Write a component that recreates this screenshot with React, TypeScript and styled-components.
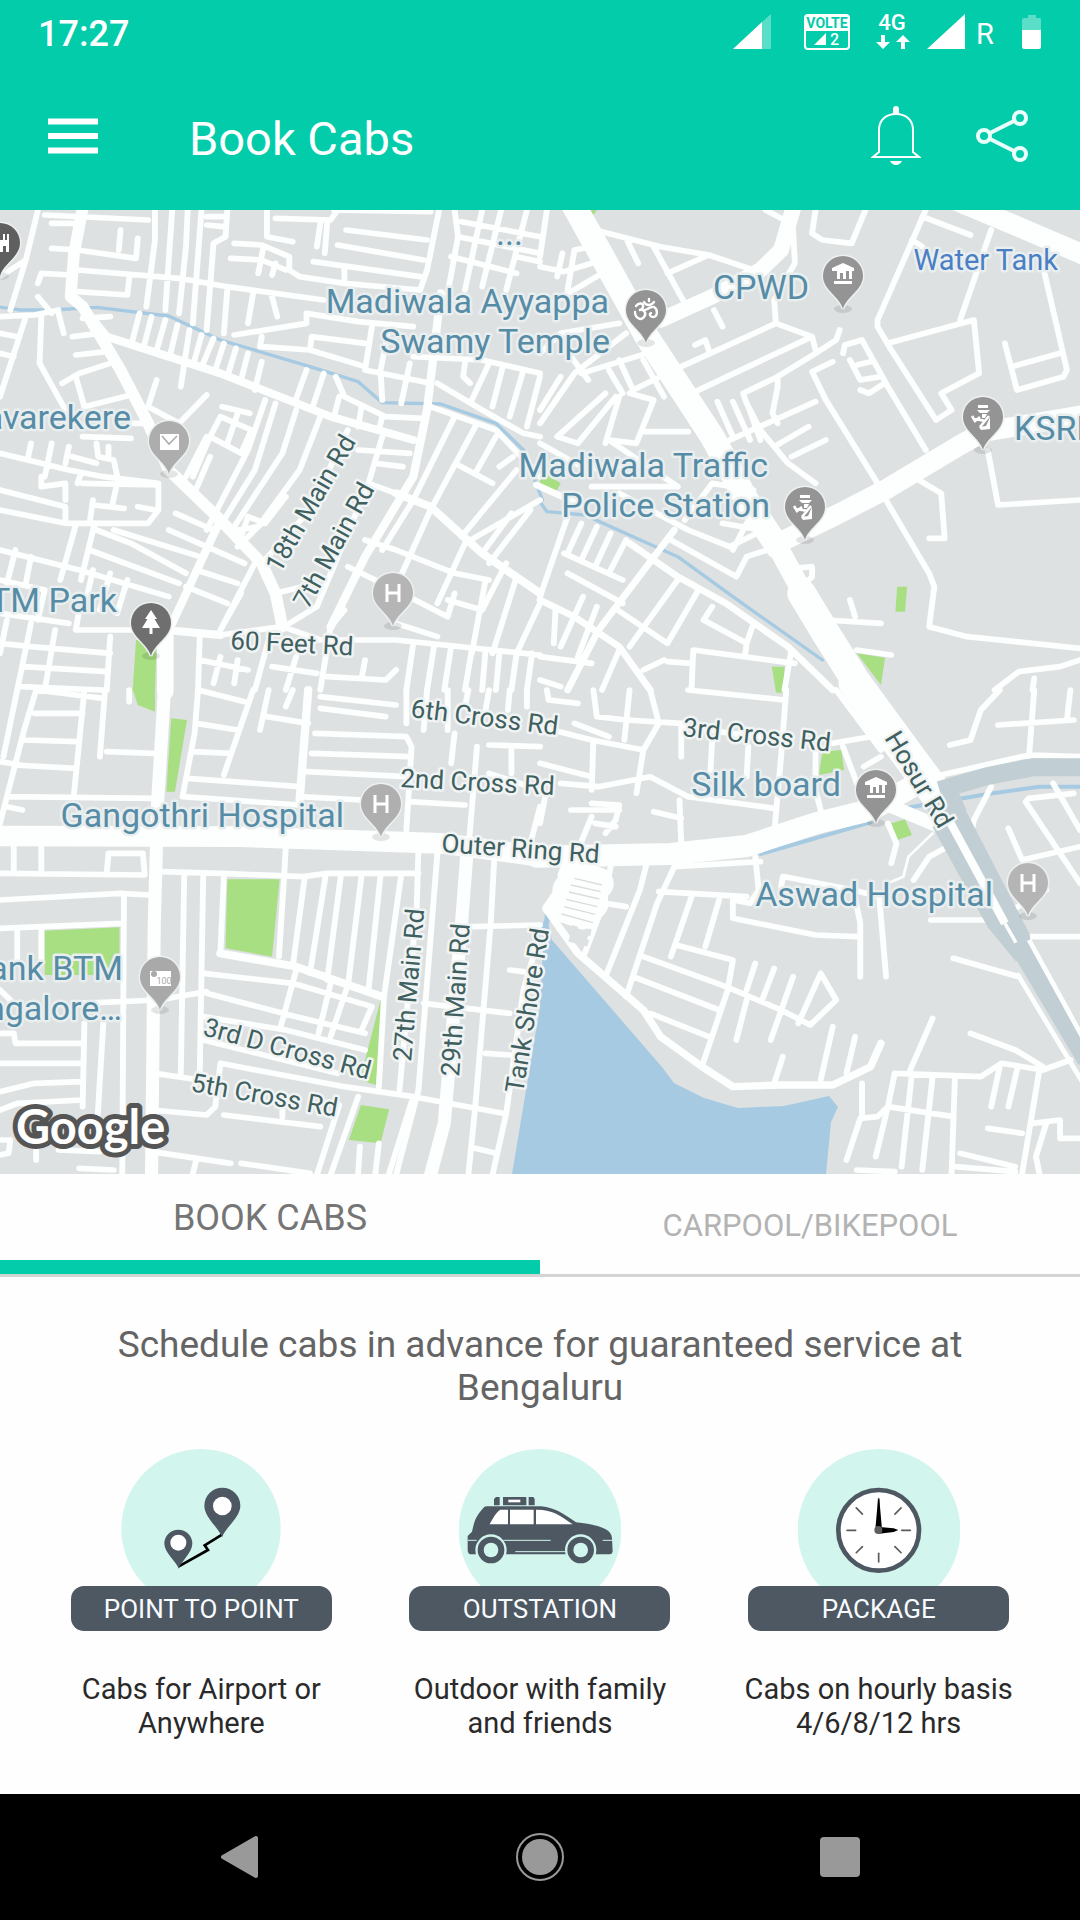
import React from "react";
import styled, { createGlobalStyle } from "styled-components";

const teal = "#03ccab";
const slate = "#4d5862";

const GlobalStyle = createGlobalStyle`
  * { box-sizing: border-box; }
  body { margin: 0; background: #fff; font-family: Roboto, "Liberation Sans", sans-serif; }
  button { font: inherit; border: 0; padding: 0; background: none; color: inherit; cursor: pointer; }
  svg { display: block; flex: none; }
`;

const Page = styled.div`
  min-height: 100vh;
  display: flex;
  flex-direction: column;
  background: #fefefe;
`;

const StatusBar = styled.div`
  height: 64px;
  padding: 4px 38px 0;
  display: flex;
  align-items: center;
  justify-content: space-between;
  background: ${teal};
  color: #fff;
`;

const Clock = styled.time`
  font-size: 36px;
  font-weight: 500;
`;

const StatusIcons = styled.div`
  padding-bottom: 4px;
  display: flex;
  align-items: center;
`;

const StatusGlyph = styled.svg<{ $gap: number }>`
  height: 36px;
  margin-left: ${(p) => p.$gap}px;
  overflow: visible;
`;

const AppBar = styled.header`
  height: 146px;
  padding: 0 46px 2px 41px;
  display: flex;
  align-items: center;
  background: ${teal};
  color: #fff;
`;

const Title = styled.h1`
  margin: 0 auto 0 84px;
  padding-top: 6px;
  font-size: 47px;
  line-height: 56px;
  font-weight: 400;
`;

const IconButton = styled.button`
  width: 64px;
  height: 64px;
  display: flex;
  align-items: center;
  justify-content: center;

  & + & {
    margin-left: 42px;
  }
`;

const MapArea = styled.section`
  flex: 1;
  min-height: 480px;
  display: flex;
  overflow: hidden;
  background: #dee1e2;
`;

const MapDrawing = styled.svg`
  width: 100%;
  flex: 1;
  height: auto;
  min-height: 0;
  font-family: Roboto, "Liberation Sans", sans-serif;
`;

const PlaceText = styled.text<{ $water?: boolean }>`
  font-size: ${(p) => (p.$water ? 29 : 34)}px;
  fill: ${(p) => (p.$water ? "#4a7fc6" : "#568ca6")};
  stroke: #e9eeef;
  stroke-width: 5px;
  stroke-linejoin: round;
  paint-order: stroke;
`;

const RoadText = styled.text`
  font-size: 26px;
  fill: #40605f;
  stroke: #f1f4f4;
  stroke-width: 5px;
  stroke-linejoin: round;
  paint-order: stroke;
`;

const LogoText = styled.text`
  font-family: Lato, Roboto, sans-serif;
  font-size: 47px;
  font-weight: 700;
  fill: #fff;
  stroke: #555;
  stroke-width: 10px;
  stroke-linejoin: round;
  paint-order: stroke;
`;

const Tabs = styled.div`
  display: grid;
  grid-template-columns: 1fr 1fr;
  border-bottom: 3px solid #d3d4d4;
`;

const Tab = styled.button<{ $active?: boolean }>`
  height: 100px;
  padding-top: 2px;
  font-size: ${(p) => (p.$active ? 36 : 31)}px;
  color: ${(p) => (p.$active ? "#757575" : "#b3b3b3")};
  border-bottom: ${(p) => (p.$active ? `14px solid ${teal}` : "0")};
`;

const Booking = styled.main`
  padding: 46px 32px 54px;
`;

const Headline = styled.h2`
  max-width: 900px;
  margin: 0 auto;
  font-size: 37px;
  line-height: 43px;
  font-weight: 400;
  text-align: center;
  color: #646464;
`;

const Services = styled.div`
  margin-top: 40px;
  display: grid;
  grid-template-columns: repeat(3, 1fr);
`;

const Service = styled.article`
  display: flex;
  flex-direction: column;
  align-items: center;
  text-align: center;
`;

const ServiceButton = styled.button`
  width: 261px;
  height: 45px;
  border-radius: 13px;
  background: ${slate};
  color: #f8fbff;
  font-size: 26px;
`;

const ServiceNote = styled.p`
  max-width: 290px;
  margin: 41px 0 0;
  font-size: 29px;
  line-height: 34px;
  color: #2a2a2a;
`;

const NavBar = styled.nav`
  height: 126px;
  padding: 0 90px;
  display: grid;
  grid-template-columns: repeat(3, 1fr);
  background: #000;
`;

const NavButton = styled.button`
  display: flex;
  align-items: center;
  justify-content: center;
`;

/* ---------- map data: each sheet is a quarter of the map, 1568 x 1440 units ---------- */

type Stroke = { w: number; d: string; c?: string };
type Sheet = { x: number; y: number; green: string[]; water: Stroke[]; roads: Stroke[]; over?: Stroke[] };

const S = 17;

const northWest: Sheet = {
  x: 0,
  y: 0,
  green: ["395,1290 455,1290 450,1445 385,1445"],
  water: [{ w: 10, d: "M-10,290 L60,300 150,300 280,292 490,318 640,390 900,470 1040,515 1110,578 1280,582 1440,640 1520,720 1575,870" }],
  roads: [
    { w: 34, d: "M240,-5 L215,130 205,260 240,290 350,480 430,640 490,780 640,930 760,1060 800,1150 820,1250" },
    { w: 24, d: "M240,290 L310,380 640,490 960,620 1200,690 M1280,250 L1240,600 1200,800 1060,1040 960,1250 M1150,850 L1250,890 1400,1030 1568,1150 M640,930 L590,1040 500,1240 M480,1260 L640,1275" },
    { w: 48, d: "M480,1280 L480,1445" },
    { w: S, d: "M110,0 L75,150 0,200 M75,150 L30,300 M130,15 L430,30 M350,60 L345,120 M400,85 L395,145 M150,40 L225,40 M150,115 L225,120 395,145 M450,0 L450,90 425,290 M500,0 L480,300 M545,0 L540,110 520,310 M585,0 L560,340 M660,0 L655,80 620,100 600,360 M600,45 L650,50 M600,20 L650,20 M225,180 L520,205 660,230 940,270 M110,220 L120,190 205,195 M225,245 L370,255 375,205 M660,240 L650,370 M735,250 L720,340 M790,260 L805,320" },
    { w: S, d: "M680,100 L760,105 840,140 840,180 870,200 1000,220 1220,240 M670,145 L760,150 830,180 M765,110 L750,190 M800,160 L790,195 M775,0 L775,80 850,95 M800,25 L960,30 980,0 M930,40 L920,110 M950,40 L943,130 M970,0 L1250,5 M1005,60 L1240,90 M980,105 L1230,150 M910,155 L1220,200 M1000,170 L1000,220 M1275,0 L1240,180 1220,240 M1320,0 L1330,80 1300,250 M1340,35 L1568,80 M1330,80 L1568,130 M1310,140 L1500,190 M1400,0 L1350,240 M1455,0 L1400,230 M1530,0 L1470,240 M1500,140 L1568,155" },
    { w: S, d: "M680,375 L890,340 890,310 1040,335 1200,350 M760,410 L900,420 905,380 1060,400 M760,380 L755,410 M900,420 L1060,470 M1080,350 L1060,480 1250,520 M1130,350 L1105,480 1110,570 M1190,460 L1165,580 M1200,440 L1400,450 1568,490 M1270,520 L1400,600 1520,670 1568,680 M1350,460 L1345,500 1365,520 M1420,460 L1370,570 M1460,470 L1430,590 M1520,480 L1480,620 M1568,500 L1530,650 M1250,590 L1440,660 1568,800" },
    { w: S, d: "M405,310 L385,390 M440,320 L420,400 M480,330 L455,420 M515,345 L495,430 M550,360 L525,530 M585,375 L565,450 M620,385 L590,460 M650,400 L625,480 M685,415 L660,500 M720,430 L700,510 M760,455 L740,540 M890,480 L855,580 M940,490 L905,600 M975,500 L1000,560 1120,620 1230,625 M985,560 L970,620 M1050,590 L1040,650 M1110,620 L1100,660" },
    { w: S, d: "M770,570 L720,720 600,960 M800,580 L740,780 650,930 M860,600 L820,730 680,950 M930,620 L870,780 750,950 690,960 M720,920 L770,940 830,860 M700,980 L720,920 M760,940 L690,1010 M1010,660 L900,900 760,1060 M1110,680 L1070,820 920,1190 840,1240 M1040,720 L1190,730 M1090,760 L1170,770 M1070,820 L1150,850 M800,1150 L920,1120 M700,1150 L640,1260 740,1060" },
    { w: S, d: "M0,320 L100,315 170,300 M120,320 L115,460 190,600 M0,370 L50,380 M0,430 L40,440 M75,320 L0,560 M110,260 L150,310 M170,310 L185,370 M240,325 L320,320 M210,380 L290,370 M220,435 L310,425 M180,520 L230,490 320,460 M220,500 L245,590 380,555 M430,590 L520,640 600,555 M455,510 L430,590 M560,800 L610,680 640,620 730,660 700,730 610,680 M645,590 L725,610 M690,610 L660,700 M610,740 L560,860 M600,680 L540,800 M380,640 L430,640 M240,680 L380,685" },
    { w: S, d: "M0,730 L200,780 300,800 460,820 M90,700 L80,750 M150,700 L130,800 M200,710 L190,760 M210,740 L280,760 M235,790 L225,820 M280,700 L285,740 330,750 345,820 M315,710 L315,740 M240,820 L460,825 M120,800 L120,830 190,820 190,870 M460,820 L460,900 430,940 200,940 M0,840 L190,890 190,940 M270,870 L260,940 M270,885 L360,895 M400,890 L450,900 M340,820 L325,890 M0,900 L190,940" },
    { w: S, d: "M220,945 L175,1110 M275,940 L235,1110 M280,960 L380,1000 540,1090 M260,1020 L520,1120 M330,960 L580,1040 M490,960 L600,1010 710,1060 M510,910 L620,960 M570,1080 L690,1120 M540,1130 L660,1180 M0,1020 L230,1080 490,1160 M45,1020 L20,1120 M90,1040 L75,1120 M0,1110 L130,1140 M270,1080 L250,1170 M320,1090 L290,1200 M370,1110 L340,1210 M230,1200 L220,1260 470,1260 M130,1140 L110,1230 M0,1210 L200,1240 M90,1240 L50,1440 M160,1260 L130,1440 M0,1300 L90,1310 320,1330 M320,1280 L310,1440 M70,1370 L310,1385 M60,1430 L300,1440 M20,1230 L0,1330" },
    { w: S, d: "M1060,990 L1150,1020 1320,1090 1420,1110 M1010,1070 L1130,1130 1300,1220 1320,1150 M1350,1000 L1270,1180 M1250,900 L1150,1130 M1200,870 L1110,1020 M1340,980 L1500,780 M1320,620 L1200,870 M1380,650 L1250,900 M1440,680 L1380,790 M1330,765 L1430,820 M1450,770 L1490,740 M1568,870 L1350,1000 M1485,910 L1400,1030 M1540,900 L1420,1060 M1000,1200 L960,1250 M1150,1240 L1270,1280 M1300,1170 L1400,1200 1470,1060 M1500,1100 L1430,1330 M1410,1110 L1370,1330 M1568,1180 L1500,1330" },
    { w: S, d: "M640,1275 L820,1250 930,1290 1150,1290 1568,1335 M1200,1300 L1180,1440 M1260,1310 L1240,1440 M1310,1310 L1290,1440 M1370,1320 L1350,1440 M1410,1320 L1400,1440 M1450,1330 L1440,1440 M1500,1330 L1485,1440 M1545,1330 L1530,1440 M960,1250 L930,1440 M580,1350 L720,1380 M640,1340 L620,1420 M690,1350 L680,1420 M580,1280 L575,1440 M780,1290 L740,1440 M950,1400 L1120,1410 1150,1380 M1060,1350 L1050,1405 M860,1340 L830,1440 M790,1370 L920,1390" },
  ],
};

const northEast: Sheet = {
  x: 540,
  y: 0,
  green: [
    "1037,1130 1066,1130 1060,1205 1032,1205",
    "920,1330 1002,1343 990,1425",
    "673,1370 710,1370 708,1445 685,1445",
    "0,780 60,820 45,850 0,825",
    "140,0 165,0 155,15",
  ],
  water: [{ w: 10, d: "M-4,870 L20,905 130,915 400,1040 560,1160 820,1350" }],
  roads: [
    { w: 72, d: "M95,-20 L310,380 500,680 600,870 690,1010" },
    { w: 60, d: "M690,1010 L790,1200 M690,1000 L860,915 1010,835 1220,705 1290,665 1580,615 M1180,-40 L1400,55 1580,135" },
    { w: 84, d: "M760,1150 L830,1270 940,1450" },
    { w: 46, d: "M735,-5 L700,120 640,180 500,260 350,330" },
    { w: S, d: "M160,60 L350,110 490,135 620,180 M490,135 L370,190 M330,110 L415,270 M250,85 L285,160 M655,0 L710,30 M735,60 L740,160 700,230 680,270 685,340 410,470 M685,340 L790,380 800,420 M790,380 L440,550 M800,0 L790,70 820,90 905,100 945,0 M870,360 L860,390 800,430 690,500 590,550 600,580 640,660 720,760 800,820 M690,500 L690,530 675,610 690,640 M800,575 L530,700 M780,650 L680,710 M830,690 L730,740 M515,575 L560,680 M560,575 L610,690 M605,590 L640,690 M505,300 L530,350 M450,405 L480,390 490,420" },
    { w: S, d: "M850,455 L790,485 830,570 980,820 1010,880 1130,1090 1145,1130 1130,1250 1240,1280 1568,1315 M880,430 L885,405 935,390 1010,530 1120,720 M900,450 L930,510 990,500 M920,465 L960,455 M930,540 L955,550 1000,520 M1120,0 L980,330 980,350 1020,420 1150,630 1195,600 1165,550 1275,490 1260,330 1010,400 M1080,90 L1110,110 M1110,20 L1250,75 M1310,60 L1220,330 M1465,190 L1530,480 1520,500 1385,540 1350,400 M1370,470 L1510,430" },
    { w: S, d: "M1100,810 L1165,850 1175,985 1130,985 M1300,720 L1330,885 1568,870 M740,1075 L790,1070 790,1100 770,1120 M830,1230 L990,1240 M900,1170 L915,1220 M920,1320 L1020,1335 M1568,1350 L1510,1370 1390,1385 1320,1440 M1435,1405 L1430,1440 M530,940 L640,960 M560,1020 L600,940" },
    { w: S, d: "M0,170 L70,185 180,150 M65,130 L50,200 M150,110 L100,120 80,240 M20,0 L0,140 M180,190 L0,300 M0,430 L60,370 230,340 M0,640 L100,490 250,370 M120,490 L310,430 M90,440 L140,510 M200,480 L240,550 M230,450 L270,540 M300,450 L360,560 M270,540 L370,490 M190,550 L50,680 110,700 220,560 M60,500 L0,600 M260,550 L330,570 280,700 200,690 M300,665 L430,665 M230,560 L190,700 M0,700 L120,770 M200,690 L400,830 M120,780 L330,760 M150,830 L390,830 M420,930 L500,820 620,840" },
    { w: 20, d: "M-10,825 L130,890 M390,960 L170,1260 80,1440 M260,1000 L400,1100 540,1180 720,1310 850,1440 M0,1170 L100,1220 230,1310 320,1440" },
    { w: S, d: "M230,850 L430,960 550,1010 630,970 M380,990 L570,1100 600,1040 720,1000 M80,920 L0,1160 M120,940 L80,1030 M165,950 L120,1050 M205,970 L160,1070 M250,990 L200,1090 M70,1030 L240,1110 M80,1090 L240,1180 M225,1200 L370,1300 460,1140 M400,1110 L260,1310 M500,1190 L475,1230 600,1300 620,1240 M125,1160 L60,1310 M165,1190 L110,1340 M45,1200 L40,1300 M440,1440 L445,1320 740,1360 M600,1300 L595,1340 M370,1355 L440,1360 M730,1320 L710,1440 M0,1340 L150,1360 M300,1380 L360,1350 M0,1410 L60,1430 M230,1320 L180,1440" },
  ],
};

const southWest: Sheet = {
  x: 0,
  y: 480,
  green: [
    "385,-4 450,-4 450,65 400,45",
    "497,85 543,90 508,305 483,305",
    "660,568 812,568 790,800 655,775",
    "130,722 347,712 347,855 130,855",
    "1105,930 1115,930 1092,1185 1045,1170",
    "1048,1245 1130,1258 1105,1360 1013,1350",
  ],
  water: [],
  roads: [
    { w: 62, d: "M-10,438 L700,440 1280,460 1575,500" },
    { w: 38, d: "M478,-10 L458,330 448,700 440,1455 M1355,500 L1340,700 1290,1300 1250,1455" },
    { w: 24, d: "M895,0 L870,330 M640,790 L860,830 1110,920" },
    { w: S, d: "M105,0 L70,120 0,400 M50,0 L10,200 M245,0 L215,310 M100,70 L240,70 M70,150 L225,155 M40,225 L220,235 M20,320 L450,325 M0,215 L60,225 M20,350 L65,360 M105,0 L300,25 M305,0 L290,200 M310,185 L445,190 M375,0 L375,35 M575,0 L565,130 530,320 M575,0 L710,35 M735,0 L650,255 M570,100 L690,120 M560,185 L670,190 M545,265 L870,290 M530,320 L870,345 M780,0 L755,120 M775,80 L895,100 M850,0 L830,50" },
    { w: S, d: "M930,20 L1150,45 M930,55 L1120,80 M915,130 L1180,140 1195,170 1180,420 M905,190 L1190,200 M890,245 L1180,260 M870,320 L1050,330 M1180,0 L1180,100 M1240,0 L1230,120 M1300,0 L1300,120 M1360,0 L1350,50 M1420,0 L1410,60 M1480,0 L1475,60 M1530,0 L1530,50 M1320,130 L1310,220 M1385,170 L1360,480 M1420,165 L1568,170 M1485,170 L1485,250 M1190,335 L1350,345 M1568,350 L1540,460 M1420,250 L1568,300" },
    { w: S, d: "M40,470 L40,550 M120,470 L120,550 M0,550 L420,555 415,490 315,490 310,550 M0,630 L350,610 430,615 M0,715 L355,700 M360,610 L355,1455 M50,720 L50,820 M120,720 L120,820 M0,900 L30,930 M600,905 L460,930 230,940 M245,1000 L240,1250 M300,1000 L280,1340 M40,1030 L45,1060 240,1060 M0,1120 L240,1120 M0,1205 L100,1180 240,1175 M0,1260 L50,1240 240,1230 M0,1350 L30,1350 25,1390 0,1395 M105,1360 L105,1410 M170,1380 L290,1385 M230,1435 L330,1440 M0,1030 L40,1030" },
    { w: S, d: "M465,545 L640,550 880,560 950,550 1215,550 M535,550 L525,1150 M590,560 L580,1150 M650,560 L640,790 M830,470 L825,560 810,800 M885,560 L850,830 M945,560 L900,850 M990,555 L950,870 M1050,555 L1010,890 M1105,555 L1070,900 M1165,555 L1115,920 1100,1190 M1215,480 L1210,650 1160,1200 M1270,490 L1215,1200 1150,1455 M1435,510 L1425,700 1380,1250 1360,1455" },
    { w: S, d: "M590,850 L850,880 1080,950 M600,910 L860,980 1060,1030 M590,980 L830,1020 1060,1080 M590,1050 L980,1150 M860,840 L815,1010 M960,880 L925,1030 M1005,900 L960,1040 M1080,950 L1050,1020 M640,1120 L1000,1190 1200,1220 1460,1270 M640,1120 L625,1250 600,1275 440,1260 M450,1150 L580,1170 M650,1275 L930,1310 M820,1255 L820,1280 M985,1245 L920,1455 M1040,1220 L960,1455 M440,1385 L670,1420 M570,1410 L560,1450 M700,1420 L900,1450 M1370,710 L1568,705 M1560,760 L1520,900 1470,1270 1430,1455 M1410,1090 L1480,1095 M1480,840 L1520,845 M1380,1375 L1440,1390 M1230,940 L1480,970 M1045,1370 L1040,1450 M1100,1360 L1090,1450 M1200,1220 L1130,1450" },
  ],
};

const southEast: Sheet = {
  x: 540,
  y: 480,
  green: ["820,185 875,180 883,240 810,255", "1020,400 1060,388 1080,435 1038,450", "685,-3 708,-3 708,8 685,8"],
  water: [
    { w: 12, d: "M640,492 L960,397 M1075,352 L1300,312 1450,290 1575,290" },
    { w: 16, d: "M105,530 L35,650 10,720" },
  ],
  roads: [
    { w: 66, d: "M-10,500 L380,492 600,468 800,400 960,360 1080,290" },
    { w: 96, d: "M915,-20 L1050,170 1150,310" },
    { w: 40, d: "M1000,340 L1160,410" },
    { w: 28, d: "M20,655 L105,530 150,500" },
    { w: 22, d: "M20,660 L110,790 300,960 350,1040 470,1130 560,1190 700,1185 850,1185 960,1130 990,1060" },
    { w: S, d: "M860,0 L990,180 M1165,255 L1420,195 1568,200 M1335,0 L1280,60 1250,150 1190,165 M1435,0 L1420,200 M1330,105 L1550,90 M1540,0 L1530,90 M1310,290 L1260,390 1250,440 M1550,310 L1420,325 1410,335 1568,580 M1490,280 L1568,420 M1360,415 L1400,510 1568,470 M1010,400 L1035,460 1020,520 M1175,475 L1130,500 1085,570" },
    { w: 8, d: "M1140,430 L1070,500 1055,560 1020,575" },
    { w: S, d: "M710,560 L910,600 930,700 930,860 M910,600 L985,620 1005,860 M705,560 L700,590 M560,630 L610,640 635,600 625,500 M560,630 L560,685 800,735 920,740 M345,605 L600,620 M390,530 L640,515 M390,530 L340,640 250,920 M310,520 L290,600 190,860 M440,620 L380,800 M520,630 L480,770 M395,765 L560,810 545,900 470,1130 M300,800 L540,890 700,960 785,1005 860,930 815,850 750,1000 M270,860 L520,960 M320,970 L490,1040 M625,820 L600,900 M600,930 L570,1050 M680,835 L645,930 M735,860 L670,1050 M705,1100 L680,1180 M850,1010 L815,1170 M915,1040 L890,1150" },
    { w: S, d: "M205,530 L185,640 130,790 M190,640 L250,650 M1135,690 L1290,690 M1410,740 L1568,740 M1200,805 L1390,860 M1250,1030 L1380,1080 1460,1130 M1140,985 L1075,1140 M1030,1150 L1280,1160 1340,1120 1460,1140 1540,1110 M1030,1150 L1010,1250 975,1400 M935,1180 L935,1285 M1010,1250 L980,1280 930,1285 890,1410 M1080,1150 L1050,1430 M1140,1160 L1110,1440 M1205,1160 L1195,1450 M1010,1250 L1200,1280 M1335,1130 L1310,1250 M1385,1140 L1360,1250 M1450,1140 L1400,1450 M1300,1315 L1400,1330 M1220,1390 L1380,1430 M1430,1300 L1510,1290 1510,1345 1568,1345 M1470,1300 L1440,1400 1450,1450 M920,1440 L1030,1445 M1205,1430 L1380,1445 M1470,600 L1380,655" },
    { w: S, d: "M155,0 L165,80 250,90 410,100 M260,0 L245,150 M320,0 L345,100 300,180 280,310 M20,0 L25,30 110,40 M0,110 L150,150 300,180 M100,100 L200,140 M155,150 L150,300 M60,280 L170,290 320,260 430,320 680,355 M410,110 L410,200 M500,150 L495,240 M605,170 L600,260 M430,0 L710,30 M715,0 L700,200 680,430 M330,365 L410,385 M405,330 L410,460 M90,360 L230,360 M150,340 L230,345 220,390 190,430 M160,400 L220,410 M150,380 L110,480 M0,220 L150,260 M15,320 L0,400 M800,190 L800,300 820,380 M880,170 L920,280 M940,230 L990,200 M850,160 L960,140 M410,110 L700,150" },
    { w: 98, d: "M100,560 L165,580 M85,600 L150,640 M75,650 L130,670" },
  ],
  over: [
    { w: 4, c: "#d9dddf", d: "M100,565 L180,585 M90,585 L176,605 M84,606 L172,627 M76,628 L166,650 M70,650 L160,673 M62,672 L154,698" },
    { w: 20, c: "#dee1e2", d: "M90,715 L108,720 M130,725 L148,728 M85,745 L140,760" },
    { w: 54, c: "#c1ced4", d: "M1160,300 L1300,258 1430,232 1580,232" },
    { w: 104, c: "#c1ced4", d: "M1165,320 L1190,380" },
    { w: 46, c: "#c1ced4", d: "M1160,400 L1320,700 1400,800 M1190,320 L1400,740 1400,800" },
    { w: 60, c: "#c1ced4", d: "M1395,770 L1590,1110" },
    { w: 24, c: "#fdfefe", d: "M1190,395 L1350,700" },
    { w: 10, c: "#fdfefe", d: "M1350,700 L1382,758" },
    { w: 14, c: "#fdfefe", d: "M1420,750 L1580,1050 M1385,850 L1580,1185" },
  ],
};

const sheets = [northWest, northEast, southWest, southEast];
const place = (s: Sheet) => `translate(${s.x} ${s.y}) scale(0.34439 0.33333)`;

type Place = { t: string; x: number; y: number; end?: boolean; water?: boolean };
const places: Place[] = [
  { t: "...", x: 523, y: 35, end: true },
  { t: "Madiwala Ayyappa", x: 609, y: 103, end: true },
  { t: "Swamy Temple", x: 610, y: 143, end: true },
  { t: "CPWD", x: 809, y: 89, end: true },
  { t: "Water Tank", x: 1058, y: 60, end: true, water: true },
  { t: "avarekere", x: 131, y: 219, end: true },
  { t: "Madiwala Traffic", x: 768, y: 267, end: true },
  { t: "Police Station", x: 770, y: 307, end: true },
  { t: "KSRP", x: 1014, y: 230 },
  { t: "TM Park", x: 117, y: 402, end: true },
  { t: "Gangothri Hospital", x: 344, y: 617, end: true },
  { t: "Silk board", x: 841, y: 586, end: true },
  { t: "Aswad Hospital", x: 993, y: 696, end: true },
  { t: "ank BTM", x: 123, y: 770, end: true },
  { t: "ngalore…", x: 122, y: 810, end: true },
];

type Road = { t: string; x: number; y: number; a: number };
const roadNames: Road[] = [
  { t: "18th Main Rd", x: 280, y: 364, a: -60 },
  { t: "7th Main Rd", x: 308, y: 400, a: -61 },
  { t: "60 Feet Rd", x: 230, y: 439, a: 3 },
  { t: "6th Cross Rd", x: 410, y: 507, a: 7 },
  { t: "2nd Cross Rd", x: 400, y: 577, a: 3 },
  { t: "Outer Ring Rd", x: 441, y: 642, a: 4 },
  { t: "3rd Cross Rd", x: 682, y: 526, a: 6 },
  { t: "Hosur Rd", x: 884, y: 528, a: 59 },
  { t: "3rd D Cross Rd", x: 202, y: 825, a: 15 },
  { t: "5th Cross Rd", x: 190, y: 881, a: 10 },
  { t: "27th Main Rd", x: 411, y: 852, a: -85 },
  { t: "29th Main Rd", x: 459, y: 867, a: -86 },
  { t: "Tank Shore Rd", x: 523, y: 884, a: -81 },
];

type PinKind = "food" | "om" | "bank" | "police" | "mail" | "hospital" | "tree" | "note";
type Pin = { k: PinKind; x: number; y: number; c: string };
const pins: Pin[] = [
  { k: "food", x: 0, y: 33, c: "#5f5f5f" },
  { k: "om", x: 646, y: 100, c: "#949494" },
  { k: "bank", x: 843, y: 66, c: "#949494" },
  { k: "police", x: 983, y: 207, c: "#949494" },
  { k: "police", x: 805, y: 297, c: "#949494" },
  { k: "mail", x: 169, y: 231, c: "#adadad" },
  { k: "hospital", x: 393, y: 383, c: "#b5b5b5" },
  { k: "tree", x: 151, y: 413, c: "#6f6f6f" },
  { k: "hospital", x: 381, y: 594, c: "#afafaf" },
  { k: "bank", x: 876, y: 580, c: "#949494" },
  { k: "hospital", x: 1028, y: 673, c: "#b5b5b5" },
  { k: "note", x: 160, y: 767, c: "#a9a9a9" },
];

const PinGlyph = ({ kind, tone }: { kind: PinKind; tone: string }) => {
  switch (kind) {
    case "bank":
      return <path fill="#fff" d="M0,-13 L11,-8 V-5 H9 V3 H6 V-5 H3 V3 H0 V-3 H-3 V3 H-6 V-5 H-11 V-8 Z M-9,5 H9 V8 H-9 Z" />;
    case "hospital":
      return <path fill="none" stroke="#fff" strokeWidth="3" d="M-6,-9 V9 M6,-9 V9 M-6,0 H6" />;
    case "mail":
      return (
        <>
          <rect x="-9" y="-7" width="19" height="16" fill="#fff" />
          <path d="M-7,-5 L0,3 8,-5" fill="none" stroke={tone} strokeWidth="1.6" />
        </>
      );
    case "tree":
      return <path fill="#fff" d="M0,-13 L6,-4 H3.500 L9,5 H1.500 V11 H-1.500 V5 H-9 L-3.500,-4 H-6 Z" />;
    case "police":
      return (
        <>
          <path d="M-5,-12 H5 V-9 H-5 Z M-6,-7 H7 L4,-4 H-3 Z M-1,-3 H4 L2,1 H-1 Z M7,0 V12 L-2,13 -4,10 3,9 Z" fill="#fff" />
          <path d="M-11,-1 L-8,4 -3,0 M-9,2 L3,4 M-3,10 L6,-1" fill="none" stroke="#fff" strokeWidth="2.600" />
        </>
      );
    case "om":
      return (
        <path
          d="M-10,-4 C-7,-8 -2,-7 -3,-3 C-3,-1 -6,0 -7,0 C-2,-1 1,3 -2,7 C-5,11 -11,8 -11,2 M-4,0 C0,2 3,-4 8,-3 C12,-1 12,7 7,7 C4,7 3,4 5,3 M-2,-8 C0,-4 5,-4 8,-8 M3,-9 V-11"
          fill="none"
          stroke="#fff"
          strokeWidth="2.400"
          strokeLinecap="round"
        />
      );
    case "note":
      return (
        <>
          <rect x="-10" y="-6" width="21" height="15" fill="#fff" />
          <circle cx="-6" cy="-3" r="3" fill={tone} />
          <text x="4" y="7" fontSize="9" textAnchor="middle" fill={tone}>100</text>
        </>
      );
    default:
      return <path fill="#fff" d="M-8,-9 H-4 V9 H-8 Z M-2,-9 H0 V-3 H3 V-9 H5 V-3 H7 V-9 H9 V9 H6 V3 H3 V9 H0 V1 H-2 Z" />;
  }
};

const CityMap = () => (
  <MapDrawing viewBox="0 0 1080 964" preserveAspectRatio="xMidYMid slice" role="img" aria-label="Map of Madiwala and BTM Layout">
    <rect width="1080" height="964" fill="#dee1e2" />
    <path
      fill="#a6cae2"
      d="M545,700 L552,730 662,857 674,873 704,888 738,898 784,896 829,886 838,897 831,912 826,964 512,964 540,797 Z"
    />
    {sheets.map((s, i) => (
      <g key={i} transform={place(s)} strokeLinecap="round" strokeLinejoin="round">
        {s.water.map((r, n) => (
          <path key={`w${n}`} d={r.d} fill="none" stroke="#a6cae2" strokeWidth={r.w} />
        ))}
        {s.green.map((g) => (
          <polygon key={g} points={g} fill="#a8df82" />
        ))}
      </g>
    ))}
    {sheets.map((s, i) => (
      <g key={i} transform={place(s)} strokeLinecap="round" strokeLinejoin="round" fill="none">
        {s.roads.map((r, n) => (
          <path key={n} d={r.d} stroke="#fdfefe" strokeWidth={r.w} />
        ))}
      </g>
    ))}
    {sheets.map((s, i) => (
      <g key={i} transform={place(s)} strokeLinejoin="round" fill="none">
        {(s.over ?? []).map((r, n) => (
          <path key={n} d={r.d} stroke={r.c} strokeWidth={r.w} />
        ))}
      </g>
    ))}
    {pins.map((p) => (
      <g key={`${p.x}-${p.y}`} transform={`translate(${p.x} ${p.y})`}>
        <ellipse cx="0" cy="33" rx="9" ry="4" fill="#000" opacity="0.1" />
        <path
          d="M0,33 C-3,21 -20,14 -20,0 A20,20 0 1 1 20,0 C20,14 3,21 0,33 Z"
          fill={p.c}
          stroke="#edf0f0"
          strokeWidth="3"
          paintOrder="stroke"
        />
        <PinGlyph kind={p.k} tone={p.c} />
      </g>
    ))}
    {roadNames.map((r) => (
      <RoadText key={r.t} transform={`translate(${r.x} ${r.y}) rotate(${r.a})`}>{r.t}</RoadText>
    ))}
    {places.map((p) => (
      <PlaceText key={p.t} x={p.x} y={p.y} textAnchor={p.end ? "end" : "start"} $water={p.water}>{p.t}</PlaceText>
    ))}
    <LogoText x="16" y="934">Google</LogoText>
  </MapDrawing>
);

const PointToPointArt = () => (
  <svg width="162" height="137" viewBox="0 0 486 411" aria-hidden="true">
    <g transform="translate(-212 -57)">
      <circle cx="455" cy="296" r="239" fill="#d2f5ed" />
      <path d="M387,410 L476,360 466,346 518,314" fill="none" stroke="#000" strokeWidth="8" />
      <path d="M518,322 C510,295 465,262 465,227 A54,54 0 0 1 573,227 C573,262 526,295 518,322 Z" fill={slate} />
      <circle cx="519" cy="228" r="28" fill="#fff" />
      <path d="M388,416 C382,395 345,368 345,341 A42,42 0 0 1 429,341 C429,368 394,395 388,416 Z" fill={slate} />
      <circle cx="387" cy="338" r="24" fill="#fff" />
    </g>
  </svg>
);

const OutstationArt = () => (
  <svg width="162" height="137" viewBox="0 0 486 411" aria-hidden="true">
    <g transform="translate(-209 -57)">
      <circle cx="452" cy="301" r="244" fill="#d2f5ed" />
      <path d="M320,201 H331 V226 H314 V207 Z M341,201 H411 V226 H341 Z M418,201 H432 L436,207 V226 H418 Z" fill={slate} />
      <rect x="357" y="209" width="36" height="8" fill="#fff" />
      <path
        d="M292,229 L455,229 C500,234 520,250 560,277 C620,284 668,294 668,325 L670,365 Q668,373 660,373 H244 Q235,372 235,360 V318 L248,305 C254,280 256,262 280,236 Q285,229 292,229 Z"
        fill={slate}
      />
      <path d="M301,283 C312,262 322,245 333,239 H356 V283 Z M362,239 H433 V283 H362 Z M440,239 C490,238 515,258 550,283 H440 Z" fill="#fff" />
      <path d="M235,331 H262 M342,331 H484 M640,331 H670 M378,365 H530" stroke="#d2f5ed" strokeWidth="3" fill="none" />
      {[305, 574].map((cx) => (
        <g key={cx}>
          <circle cx={cx} cy="360" r="47" fill="#d2f5ed" />
          <circle cx={cx} cy="360" r="40" fill={slate} />
          <circle cx={cx} cy="360" r="22" fill="#d2f5ed" />
        </g>
      ))}
    </g>
  </svg>
);

const PackageArt = () => (
  <svg width="162" height="137" viewBox="0 0 486 411" aria-hidden="true">
    <g transform="translate(-203 -57)">
      <circle cx="446" cy="301" r="244" fill="#d2f5ed" />
      <circle cx="445" cy="301" r="121" fill="#fff" stroke={slate} strokeWidth="14" />
      {[45, 90, 135, 180, 225, 270, 315, 0].map((a) => (
        <path key={a} d="M445,206 V232" stroke="#5b5b5b" strokeWidth="5" strokeLinecap="round" transform={`rotate(${a} 445 301)`} />
      ))}
      <path d="M443,208 H447 L455,298 H435 Z M447,291 L490,295 504,300 490,306 447,311 Z" fill="#000" />
      <circle cx="444" cy="300" r="12" fill="#5e5e5e" />
    </g>
  </svg>
);

const services = [
  { name: "POINT TO POINT", note: "Cabs for Airport or Anywhere", Art: PointToPointArt },
  { name: "OUTSTATION", note: "Outdoor with family and friends", Art: OutstationArt },
  { name: "PACKAGE", note: "Cabs on hourly basis 4/6/8/12 hrs", Art: PackageArt },
];

export default function App() {
  return (
    <Page>
      <GlobalStyle />
      <StatusBar>
        <Clock>17:27</Clock>
        <StatusIcons aria-hidden="true">
          <StatusGlyph $gap={0} width="38" viewBox="0 0 38 36">
            <path d="M0,35 L29,8 V35 Z" fill="#fff" />
            <path d="M29,8 L38,0 V35 H29 Z" fill="#fff" opacity="0.35" />
          </StatusGlyph>
          <StatusGlyph $gap={33} width="46" viewBox="0 0 46 36">
            <rect x="1" y="1" width="44" height="34" rx="3" fill="none" stroke="#fff" strokeWidth="2" />
            <rect x="1" y="1" width="44" height="16" fill="#fff" />
            <text x="23" y="14" textAnchor="middle" fontSize="14" fontWeight="700" fill={teal}>VOLTE</text>
            <path d="M10,31 L22,19 V31 Z" fill="#fff" />
            <text x="26" y="31" fontSize="16" fontWeight="500" fill="#fff">2</text>
          </StatusGlyph>
          <StatusGlyph $gap={26} width="34" viewBox="0 0 34 36">
            <text x="16" y="16" textAnchor="middle" fontSize="22" fontWeight="500" fill="#fff">4G</text>
            <path d="M5,21 H9 V28 H14 L7,35 0,28 H5 Z M25,35 H29 V28 H34 L27,21 20,28 H25 Z" fill="#fff" />
          </StatusGlyph>
          <StatusGlyph $gap={17} width="38" viewBox="0 0 38 36">
            <path d="M0,35 L38,0 V35 Z" fill="#fff" />
          </StatusGlyph>
          <StatusGlyph $gap={11} width="20" viewBox="0 0 20 36">
            <text x="0" y="30" fontSize="29" fill="#fff">R</text>
          </StatusGlyph>
          <StatusGlyph $gap={26} width="20" viewBox="0 0 20 36">
            <path d="M6,1 H14 V4 H18 Q19,4 19,6 V16 H0 V6 Q0,4 2,4 H6 Z" fill="#fff" opacity="0.35" />
            <path d="M0,16 H19 V33 Q19,35 17,35 H2 Q0,35 0,33 Z" fill="#fff" />
          </StatusGlyph>
        </StatusIcons>
      </StatusBar>

      <AppBar>
        <IconButton aria-label="Open menu">
          <svg width="50" height="36" viewBox="0 0 50 36">
            <path d="M0,3.500 H50 M0,18 H50 M0,32.500 H50" stroke="#fff" strokeWidth="6" />
          </svg>
        </IconButton>
        <Title>Book Cabs</Title>
        <IconButton aria-label="Notifications">
          <svg width="50" height="60" viewBox="0 0 50 60" fill="none" stroke="#fff" strokeWidth="2">
            <path d="M2,51 L8,46 V24 C8,14 15,8 25,8 C35,8 42,14 42,24 V46 L48,51 Z" />
            <path d="M22,8 V3 Q22,0 25,0 Q28,0 28,3 V8 Z M19,55 H31 Q29,59 25,59 Q21,59 19,55 Z" fill="#fff" stroke="none" />
          </svg>
        </IconButton>
        <IconButton aria-label="Share">
          <svg width="52" height="54" viewBox="0 0 52 54" fill="none" stroke="#eafffa" strokeWidth="4">
            <circle cx="8" cy="27" r="6" />
            <circle cx="44" cy="9" r="6" />
            <circle cx="44" cy="45" r="6" />
            <path d="M14,24 L38,12 M14,30 L38,42" />
          </svg>
        </IconButton>
      </AppBar>

      <MapArea>
        <CityMap />
      </MapArea>

      <Tabs role="tablist">
        <Tab role="tab" aria-selected="true" $active>BOOK CABS</Tab>
        <Tab role="tab" aria-selected="false">CARPOOL/BIKEPOOL</Tab>
      </Tabs>

      <Booking>
        <Headline>Schedule cabs in advance for guaranteed service at Bengaluru</Headline>
        <Services>
          {services.map(({ name, note, Art }) => (
            <Service key={name}>
              <Art />
              <ServiceButton>{name}</ServiceButton>
              <ServiceNote>{note}</ServiceNote>
            </Service>
          ))}
        </Services>
      </Booking>

      <NavBar aria-label="System navigation">
        <NavButton aria-label="Back">
          <svg width="40" height="44" viewBox="0 0 40 44">
            <path d="M36,3 V41 L3,22 Z" fill="#999" stroke="#999" strokeWidth="4" strokeLinejoin="round" />
          </svg>
        </NavButton>
        <NavButton aria-label="Home">
          <svg width="48" height="48" viewBox="0 0 48 48">
            <circle cx="24" cy="24" r="23" fill="none" stroke="#999" strokeWidth="2" />
            <circle cx="24" cy="24" r="18" fill="#999" />
          </svg>
        </NavButton>
        <NavButton aria-label="Recent apps">
          <svg width="40" height="40" viewBox="0 0 40 40">
            <rect width="40" height="40" rx="4" fill="#999" />
          </svg>
        </NavButton>
      </NavBar>
    </Page>
  );
}
